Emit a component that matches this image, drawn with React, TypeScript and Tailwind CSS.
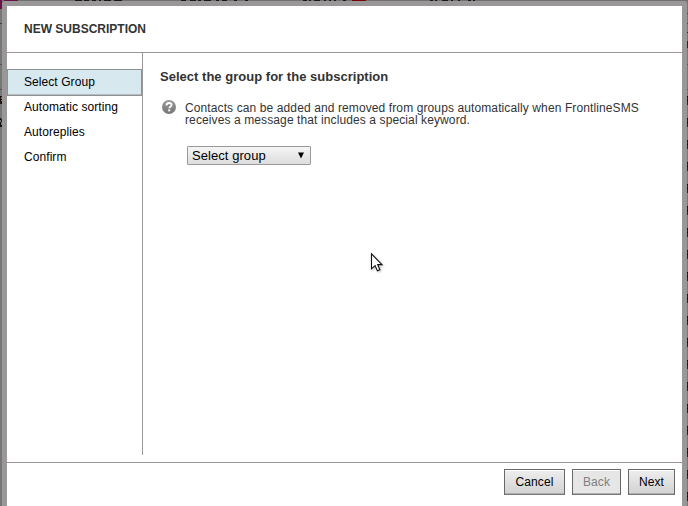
import React from "react";

const steps = ["Select Group", "Automatic sorting", "Autoreplies", "Confirm"];

const rowMarks = Array.from({ length: 19 }, (_, i) => i);

const tabMarks = [
  { x: 75, w: 7 }, { x: 84, w: 5 }, { x: 92, w: 4 }, { x: 99, w: 2 }, { x: 104, w: 7 }, { x: 114, w: 8 },
  { x: 181, w: 5 }, { x: 190, w: 6 }, { x: 198, w: 3 }, { x: 204, w: 7 }, { x: 216, w: 3 }, { x: 222, w: 5 }, { x: 234, w: 3 }, { x: 245, w: 3 },
  { x: 303, w: 4 }, { x: 309, w: 2 }, { x: 314, w: 6 }, { x: 324, w: 2 }, { x: 329, w: 2 }, { x: 334, w: 2 }, { x: 343, w: 3 },
  { x: 430, w: 3 }, { x: 435, w: 2 }, { x: 442, w: 6 }, { x: 451, w: 2 }, { x: 458, w: 2 }, { x: 468, w: 3 }, { x: 473, w: 2 },
];

function Backdrop() {
  return (
    <div className="absolute inset-0 overflow-hidden bg-[#777777]">
      <svg className="absolute inset-0" width="688" height="506" shapeRendering="crispEdges" aria-hidden="true">
        <rect x="0" y="0" width="688" height="1" fill="#707070" />
        <rect x="0" y="0" width="2" height="9" fill="#6b1047" />
        <rect x="4" y="0" width="14" height="1" fill="#6b1047" />
        <rect x="0" y="23" width="2" height="1" fill="#444444" />
        <rect x="0" y="64" width="2" height="1" fill="#555555" />
        <rect x="0" y="89" width="2" height="1" fill="#555555" />
        {tabMarks.map((m) => (
          <rect key={m.x} x={m.x} y="0" width={m.w} height="1" fill="#18191d" />
        ))}
        <rect x="352" y="0" width="14" height="1" fill="#760006" />
        <rect x="0" y="96" width="2" height="1" fill="#111111" />
        <rect x="0" y="97" width="1" height="7" fill="#251611" />
        <rect x="0" y="99" width="2" height="1" fill="#111111" />
        <rect x="1" y="101" width="1" height="3" fill="#251611" />
        <rect x="0" y="118" width="1" height="2" fill="#111111" />
        <rect x="1" y="119" width="1" height="3" fill="#251611" />
        <rect x="0" y="122" width="1" height="3" fill="#111111" />
        <rect x="0" y="125" width="2" height="2" fill="#111111" />
        <rect x="687" y="13" width="1" height="1" fill="#444444" />
        <rect x="687" y="23" width="1" height="1" fill="#444444" />
        <rect x="687" y="32" width="1" height="1" fill="#222222" />
        <rect x="687" y="41" width="1" height="7" fill="#2b2416" />
        <rect x="687" y="64" width="1" height="1" fill="#555555" />
        <rect x="687" y="89" width="1" height="1" fill="#555555" />
        {rowMarks.map((i) => (
          <g key={i}>
            <rect x="687" y={96 + i * 22} width="1" height="9" fill="#10233f" />
            <rect x="687" y={96 + i * 22} width="1" height="1" fill="#080808" />
            <rect x="687" y={100 + i * 22} width="1" height="1" fill="#080808" />
          </g>
        ))}
      </svg>
    </div>
  );
}

function HelpIcon() {
  return (
    <svg width="16" height="16" viewBox="0 0 16 16" className="block shrink-0">
      <defs>
        <linearGradient id="helpFill" x1="0" y1="0" x2="0" y2="1">
          <stop offset="0" stopColor="#989898" />
          <stop offset="1" stopColor="#777777" />
        </linearGradient>
      </defs>
      <circle cx="8" cy="8" r="7" fill="url(#helpFill)" />
      <path d="M5.5 6.4C5.5 4.7 6.6 4 8 4s2.6.8 2.6 2.1c0 1.6-2.4 1.5-2.4 3.2" fill="none" stroke="#fff" strokeWidth="1.8" />
      <rect x="7.2" y="10.4" width="2" height="1.9" fill="#fff" />
    </svg>
  );
}

function Cursor() {
  return (
    <svg className="absolute left-[370px] top-[252px] drop-shadow-[1px_1px_1px_rgba(0,0,0,0.25)]" width="14" height="21" viewBox="0 0 15 22">
      <path d="M1.6 1.8v16l3.8-3.5 2.5 5.6 2.7-1.2-2.4-5.4h4.6z" fill="#fff" stroke="#111" strokeWidth="1.2" />
    </svg>
  );
}

const buttonBase =
  "h-[26px] border border-[#686868] border-b-[#777] text-[12px] leading-[24px] text-center tracking-[0.1px] shadow-[inset_0_-1px_0_#b0b0b0,inset_0_1px_0_#fff]";

export default function App() {
  return (
    <div className="relative h-[506px] w-[688px] overflow-hidden font-['Liberation_Sans',Arial,sans-serif] text-[12px] text-black">
      <Backdrop />
      <div className="relative h-full pl-[2px] pr-px pt-px">
        <div className="h-full rounded-t-[3px] bg-[#999797] pl-[5px] pr-[5px] pt-[5px]">
          <div className="flex h-full flex-col bg-white">
            <header className="flex h-[47px] shrink-0 items-center border-b border-[#999797] pl-[17px]">
              <h1 className="text-[12px] font-bold leading-[14px] text-[#333]">NEW SUBSCRIPTION</h1>
            </header>
            <div className="flex h-[402px] shrink-0">
              <nav className="w-[136px] shrink-0 border-r border-[#999797] pt-4 tracking-[0.07px]">
                <ul>
                  {steps.map((step, i) => (
                    <li
                      key={step}
                      className={
                        i === 0
                          ? "h-[27px] border border-[#8e9293] bg-[#d7e8ee] pl-4 leading-[25px] shadow-[inset_0_-1px_0_#b4bdc0]"
                          : "h-[25px] pl-[17px] leading-[22px]"
                      }
                    >
                      {step}
                    </li>
                  ))}
                </ul>
              </nav>
              <main className="pl-[17px] pt-4 text-[#333]">
                <h2 className="text-[13px] font-bold leading-[16px] tracking-[0.02px]">Select the group for the subscription</h2>
                <div className="mt-[14px] flex pl-px">
                  <HelpIcon />
                  <p className="ml-2 mt-[3px] w-[480px] leading-[12px] tracking-[0.108px]">
                    Contacts can be added and removed from groups automatically when FrontlineSMS
                    <br />
                    receives a message that includes a special keyword.
                  </p>
                </div>
                <button className="ml-[27px] mt-5 flex h-[19px] w-[124px] items-center justify-between rounded-[1px] border border-[#999] bg-linear-to-b from-[#f5f5f5] to-[#dddddd] pl-1 pr-[6px] text-[13px] leading-[17px] tracking-[0.06px] text-black">
                  <span>Select group</span>
                  <svg width="6" height="7" viewBox="0 0 6 7">
                    <path d="M0 .5h6L3 6.5z" fill="#000" />
                  </svg>
                </button>
              </main>
            </div>
            <footer className="mt-[7px] flex flex-1 items-start justify-end gap-[7px] border-t border-[#999797] pr-[7px] pt-[6px]">
              <button className={`${buttonBase} w-[61px] bg-linear-to-b from-[#eeeeee] to-[#d2d2d2]`}>Cancel</button>
              <button disabled className={`${buttonBase} w-[49px] bg-[#e6e6e6] text-[#808080]`}>Back</button>
              <button className={`${buttonBase} w-[47px] bg-linear-to-b from-[#eeeeee] to-[#d2d2d2]`}>Next</button>
            </footer>
          </div>
        </div>
      </div>
      <Cursor />
    </div>
  );
}
